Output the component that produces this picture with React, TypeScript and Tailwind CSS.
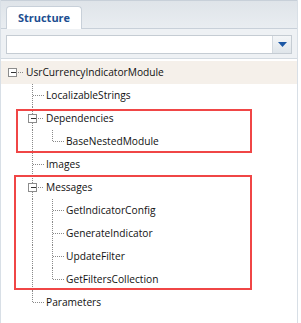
import React from "react";

type Node = {
  label: string;
  level: number;
  open?: boolean;
  // for each ancestor level (1..level-1), whether its vertical line continues
  pass: boolean[];
  last?: boolean;
};

const rows: Node[] = [
  { label: "UsrCurrencyIndicatorModule", level: 0, open: true, pass: [] },
  { label: "LocalizableStrings", level: 1, pass: [] },
  { label: "Dependencies", level: 1, open: true, pass: [] },
  { label: "BaseNestedModule", level: 2, pass: [true], last: true },
  { label: "Images", level: 1, pass: [] },
  { label: "Messages", level: 1, open: true, pass: [] },
  { label: "GetIndicatorConfig", level: 2, pass: [true] },
  { label: "GenerateIndicator", level: 2, pass: [true] },
  { label: "UpdateFilter", level: 2, pass: [true] },
  { label: "GetFiltersCollection", level: 2, pass: [true], last: true },
  { label: "Parameters", level: 1, pass: [], last: true },
];

const LINE = "#8a8a8a";

function Elbow({ node }: { node: Node }) {
  const w = 23 + node.level * 20;
  const h = 23;
  const cy = 11.5;
  const cx = 11 + node.level * 20;
  return (
    <svg width={w} height={h} className="shrink-0" shapeRendering="crispEdges">
      {node.pass.map((p, i) =>
        p ? (
          <line
            key={i}
            x1={31.5 + i * 20}
            y1={0}
            x2={31.5 + i * 20}
            y2={h}
            stroke={LINE}
            strokeDasharray="1 1"
          />
        ) : null
      )}
      {node.level > 0 && (
        <line
          x1={cx + 0.5}
          y1={0}
          x2={cx + 0.5}
          y2={node.last ? cy + 0.5 : h}
          stroke={LINE}
          strokeDasharray="1 1"
        />
      )}
      {node.open ? (
        <>
          <line x1={cx + 6} y1={cy} x2={cx + 12} y2={cy} stroke={LINE} strokeDasharray="1 1" />
          <rect x={cx - 3.5} y={cy - 4} width={8} height={8} fill="#fff" stroke="#8c8c8c" />
          <line x1={cx - 1} y1={cy} x2={cx + 4} y2={cy} stroke="#333" />
        </>
      ) : (
        <line x1={cx + 1} y1={cy} x2={cx + 12} y2={cy} stroke={LINE} strokeDasharray="1 1" />
      )}
    </svg>
  );
}

export default function App() {
  return (
    <div
      className="w-[301px] h-[323px] bg-white overflow-hidden relative"
      style={{ fontFamily: '"Open Sans", "Liberation Sans", sans-serif' }}
    >
      <div className="w-[298px] h-full border-l border-r border-[#d8dfe6] flex flex-col">
        <div className="h-[29px] shrink-0 border-t border-b border-[#c8d0d9] bg-gradient-to-b from-[#dfe4e9] to-[#e9edf1] flex items-end pl-[5px]">
          <div className="w-[76px] h-[23px] -mb-px bg-white border border-b-0 border-[#c8d0d9] rounded-t-[4px] flex items-center justify-center text-[11px] font-bold text-[#1d4e91]">
            Structure
          </div>
        </div>
        <div className="h-[30px] shrink-0 bg-[#eef1f4] border-b border-[#d2d9e0] px-[5px] pt-[6px]">
          <div className="h-[19px] bg-white border border-[#c5ccd3] flex justify-end">
            <div className="w-[19px] h-full border-l border-[#d3d9df] bg-gradient-to-b from-[#f4f6f8] to-[#dfe5ea] flex items-center justify-center">
              <svg width="9" height="5" viewBox="0 0 9 5">
                <path d="M0 0 H9 L4.5 5 Z" fill="#1b57a5" />
              </svg>
            </div>
          </div>
        </div>
        <div className="flex-1 pt-[2px]">
          {rows.map((r, i) => (
            <div
              key={i}
              className={
                "h-[23px] flex items-center text-[10.2px] text-[#111] " +
                (i === 0 ? "bg-[#f5f0ea]" : "")
              }
            >
              <Elbow node={r} />
              <span className="pl-[2px] whitespace-nowrap">{r.label}</span>
            </div>
          ))}
        </div>
      </div>
      <div className="absolute left-[16px] top-[109px] w-[236px] h-[44px] border-2 border-[#f04646]" />
      <div className="absolute left-[14px] top-[175px] w-[238px] h-[115px] border-2 border-[#f04646]" />
    </div>
  );
}
